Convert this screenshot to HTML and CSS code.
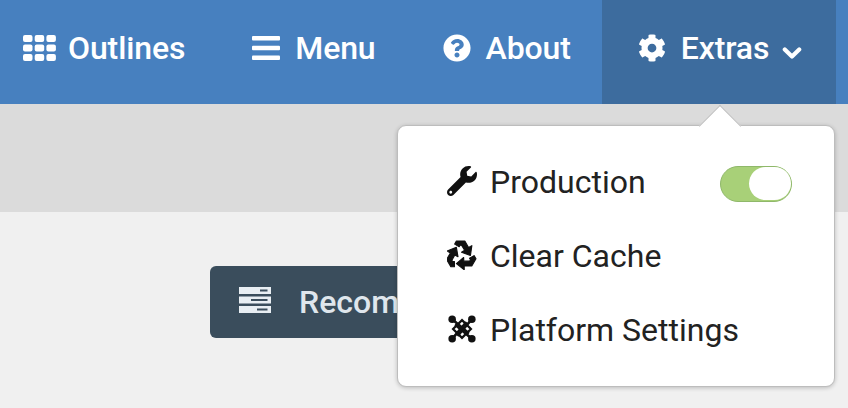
FILE: index.html
```html
<!DOCTYPE html>
<html lang="en">
<head>
<meta charset="utf-8">
<title>Extras menu</title>
<link rel="stylesheet" href="styles.css">
</head>
<body>
<nav class="nav">
  <a class="nav-item first">
    <svg class="icon-th" viewBox="0 0 33 26"><rect x="0" y="0" width="9.5" height="7" rx="2"/><rect x="11.7" y="0" width="9.5" height="7" rx="2"/><rect x="23.4" y="0" width="9.5" height="7" rx="2"/><rect x="0" y="9.5" width="9.5" height="7" rx="2"/><rect x="11.7" y="9.5" width="9.5" height="7" rx="2"/><rect x="23.4" y="9.5" width="9.5" height="7" rx="2"/><rect x="0" y="19" width="9.5" height="7" rx="2"/><rect x="11.7" y="19" width="9.5" height="7" rx="2"/><rect x="23.4" y="19" width="9.5" height="7" rx="2"/></svg>
    <span>Outlines</span>
  </a>
  <a class="nav-item">
    <svg class="icon-bars" viewBox="0 0 28 24"><rect y="0" width="28" height="4.4" rx="1"/><rect y="9.8" width="28" height="4.4" rx="1"/><rect y="19.6" width="28" height="4.4" rx="1"/></svg>
    <span>Menu</span>
  </a>
  <a class="nav-item">
    <svg class="icon-q" viewBox="0 0 512 512"><path d="M504 256c0 136.997-111.043 248-248 248S8 392.997 8 256C8 119.083 119.043 8 256 8s248 111.083 248 248zM262.655 90c-54.497 0-89.255 22.957-116.549 63.758-3.536 5.286-2.353 12.415 2.715 16.258l34.699 26.31c5.205 3.947 12.621 3.008 16.665-2.122 17.864-22.658 30.113-35.797 57.303-35.797 20.429 0 45.698 13.148 45.698 32.958 0 14.976-12.363 22.667-32.534 33.976C247.128 238.528 216 254.941 216 296v4c0 6.627 5.373 12 12 12h56c6.627 0 12-5.373 12-12v-1.333c0-28.462 83.186-29.647 83.186-106.667 0-58.002-60.165-102-116.531-102zM256 338c-25.365 0-46 20.635-46 46 0 25.364 20.635 46 46 46s46-20.636 46-46c0-25.365-20.635-46-46-46z"/></svg>
    <span>About</span>
  </a>
  <a class="nav-item active">
    <svg class="icon-cog" viewBox="0 0 512 512"><path d="M487.4 315.7l-42.6-24.6c4.3-23.2 4.3-47 0-70.2l42.6-24.6c4.9-2.8 7.1-8.6 5.5-14-11.1-35.6-30-67.8-54.7-94.6-3.8-4.1-10-5.1-14.8-2.3L380.8 110c-17.9-15.4-38.5-27.3-60.8-35.1V25.8c0-5.6-3.9-10.5-9.4-11.7-36.7-8.2-74.3-7.8-109.2 0-5.5 1.2-9.4 6.1-9.4 11.7V75c-22.2 7.9-42.8 19.8-60.8 35.1L88.7 85.5c-4.9-2.8-11-1.9-14.8 2.3-24.7 26.7-43.6 58.9-54.7 94.6-1.7 5.4.6 11.2 5.5 14L67.3 221c-4.3 23.2-4.3 47 0 70.2l-42.6 24.6c-4.9 2.8-7.1 8.6-5.5 14 11.1 35.6 30 67.8 54.7 94.6 3.8 4.1 10 5.1 14.8 2.3l42.6-24.6c17.9 15.4 38.5 27.3 60.8 35.1v49.2c0 5.6 3.9 10.5 9.4 11.7 36.7 8.2 74.3 7.8 109.2 0 5.5-1.2 9.4-6.1 9.4-11.7v-49.2c22.2-7.9 42.8-19.8 60.8-35.1l42.6 24.6c4.9 2.8 11 1.9 14.8-2.3 24.7-26.7 43.6-58.9 54.7-94.6 1.5-5.5-.7-11.3-5.6-14.1zM256 336c-44.1 0-80-35.9-80-80s35.9-80 80-80 80 35.9 80 80-35.9 80-80 80z"/></svg>
    <span>Extras</span>
    <svg class="icon-chev" viewBox="0 0 20 14"><path d="M2.8 3.5 10 10.5l7.2-7" fill="none" stroke="#fff" stroke-width="4.2" stroke-linecap="round" stroke-linejoin="round"/></svg>
  </a>
</nav>
<div class="band"></div>
<main class="content">
  <button class="recommend">
    <svg class="icon-server" viewBox="0 0 32 26"><path d="M0 0h32v7H0zM0 9.5h32v7H0zM0 19h32v7H0z" fill="#e8eef3"/><path d="M21 2.6h7.5v1.8H21zM12 12.1h16.5v1.8H12zM18 21.6h10.5v1.8H18z" fill="#3a4d5c"/></svg>
    <span>Recommended</span>
  </button>
</main>
<div class="dropdown">
  <div class="row">
    <svg class="row-icon" viewBox="0 0 512 512"><path d="M507.73 109.1c-2.24-9.03-13.54-12.09-20.12-5.51l-74.36 74.36-67.88-11.31-11.31-67.88 74.36-74.36c6.62-6.62 3.43-17.9-5.66-20.16-47.38-11.74-99.55.91-136.58 37.93-39.64 39.64-50.55 97.1-34.05 147.2L18.74 402.76c-24.99 24.99-24.99 65.51 0 90.5 24.99 24.99 65.51 24.99 90.5 0l213.21-213.21c50.12 16.71 107.47 5.68 147.37-34.22 37.07-37.07 49.7-89.32 37.91-136.73zM64 472c-13.25 0-24-10.75-24-24 0-13.26 10.75-24 24-24s24 10.74 24 24c0 13.25-10.75 24-24 24z"/></svg>
    <span class="row-label">Production</span>
    <span class="toggle"><span class="knob"></span></span>
  </div>
  <div class="row">
    <svg class="row-icon" viewBox="0 0 32 32"><defs><path id="rc" d="M11 1 20 1 24 8 27.5 6 26 16.5 16.5 13 19.8 11 16.5 5.5 15 5.5 14 7.2 9.2 4.4Z" stroke="#111" stroke-width="1.2" stroke-linejoin="round"/></defs><g transform="translate(-1 0)"><use href="#rc"/><use href="#rc" transform="rotate(120 16 16.5)"/><use href="#rc" transform="rotate(240 16 16.5)"/></g></svg>
    <span class="row-label">Clear Cache</span>
  </div>
  <div class="row">
    <svg class="row-icon" viewBox="0 0 32 32"><defs><path id="jm" d="M5.5 5.5 22.5 20" fill="none" stroke="#111" stroke-width="2.8" stroke-linecap="round"/></defs><use href="#jm"/><use href="#jm" transform="rotate(90 16 16)"/><use href="#jm" transform="rotate(180 16 16)"/><use href="#jm" transform="rotate(270 16 16)"/><path d="M16 6.5 25.5 16 16 25.5 6.5 16Z" fill="none" stroke="#111" stroke-width="2.4"/><circle cx="5.5" cy="5.5" r="4"/><circle cx="26.5" cy="5.5" r="4"/><circle cx="5.5" cy="26.5" r="4"/><circle cx="26.5" cy="26.5" r="4"/></svg>
    <span class="row-label">Platform Settings</span>
  </div>
</div>
</body>
</html>
```

FILE: styles.css
```css
* { box-sizing: border-box; }
html, body { margin: 0; height: 100%; }
body {
  position: relative;
  overflow: hidden;
  background: #f0f0f0;
  font-family: Roboto, "Liberation Sans", sans-serif;
}
.nav {
  display: flex;
  height: 104px;
  padding-left: 23px;
  background: #4780bf;
  color: #fff;
  font-size: 32px;
  font-weight: 500;
  letter-spacing: -.12px;
}
.nav-item {
  display: flex;
  align-items: center;
  margin-right: 67px;
  padding-bottom: 8px;
}
.nav-item svg { fill: #fff; flex: none; }
.icon-th { width: 33px; height: 26px; margin-right: 12px; }
.icon-bars { width: 28px; height: 24px; margin-right: 15px; }
.icon-q { width: 28px; height: 28px; margin-right: 15px; }
.icon-cog { width: 28px; height: 28px; margin-right: 15px; }
.icon-chev { width: 20px; height: 14px; margin-left: 13px; margin-top: 9px; }
.nav-item.active {
  margin-left: -36px;
  margin-right: 0;
  padding: 0 34px 8px 36px;
  background: #3d6c9e;
}
.band { height: 108px; background: #dbdbdb; }
.content { padding: 54px 0 0 210px; }
.recommend {
  display: flex;
  align-items: center;
  width: 330px;
  height: 72px;
  padding: 0 0 0 29px;
  border: 0;
  border-radius: 6px;
  background: #3a4d5c;
  color: #dfe6ec;
  font: 500 32px Roboto, "Liberation Sans", sans-serif;
}
.icon-server { width: 32px; height: 26px; margin-right: 28px; margin-top: -4px; }
.dropdown {
  position: absolute;
  left: 397px;
  top: 125px;
  width: 438px;
  height: 262px;
  padding: 19px 42px 19px 49px;
  background: #fff;
  border: 1px solid #bdbdbd;
  border-radius: 9px;
  box-shadow: 0 1px 4px rgba(0, 0, 0, .22);
  color: #222;
  font-size: 32px;
}
.dropdown::before {
  content: "";
  position: absolute;
  left: 307px;
  top: -15px;
  width: 29px;
  height: 29px;
  background: #fff;
  border: 1px solid #bdbdbd;
  border-right: 0;
  border-bottom: 0;
  transform: rotate(45deg);
}
.row { position: relative; display: flex; align-items: center; height: 74px; }
.row-icon { width: 30px; height: 30px; margin-right: 13px; margin-top: -2px; flex: none; fill: #111; }
.row-label { flex: 1; }
.toggle {
  display: flex;
  justify-content: flex-end;
  width: 72px;
  height: 36px;
  margin-top: 4px;
  background: #a8d078;
  border: 1.5px solid #8fb86a;
  border-radius: 18px;
}
.knob {
  width: 42px;
  height: 33px;
  background: #fff;
  border-radius: 17px;
}
```
